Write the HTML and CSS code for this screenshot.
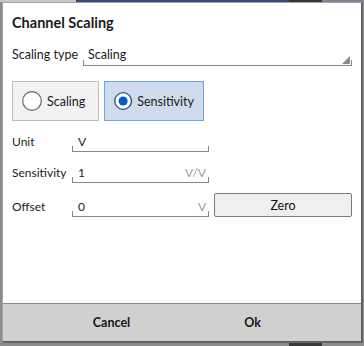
FILE: index.html
```html
<!DOCTYPE html>
<html lang="en">
<head>
    <meta charset="UTF-8">
    <meta name="viewport" content="width=device-width, initial-scale=1.0">
    <title>Channel Scaling</title>
    <link rel="stylesheet" href="styles.css">
</head>
<body>
    <div class="dialog">
        <div class="dialog-body">
            <h2 class="title">Channel Scaling</h2>

            <div class="type-row">
                <span class="label">Scaling type</span>
                <div class="select">
                    <span>Scaling</span>
                    <span class="grip"></span>
                </div>
            </div>

            <div class="toggle">
                <div class="opt">
                    <svg class="radio" width="20" height="20" viewBox="0 0 20 20">
                        <circle cx="10" cy="10" r="9.3" fill="#fff" stroke="#666" stroke-width="1.2"/>
                    </svg>
                    Scaling
                </div>
                <div class="opt opt-on">
                    <svg class="radio" width="20" height="20" viewBox="0 0 20 20">
                        <circle cx="10" cy="10" r="9.2" fill="#fff" stroke="#1d4f8f" stroke-width="1.4"/>
                        <circle cx="10" cy="10" r="5" fill="#0b5cc1"/>
                    </svg>
                    Sensitivity
                </div>
            </div>

            <div class="field-row">
                <span class="label">Unit</span>
                <div class="field"><span>V</span></div>
            </div>
            <div class="field-row">
                <span class="label">Sensitivity</span>
                <div class="field"><span>1</span><span class="suffix">V/V</span></div>
            </div>
            <div class="field-row">
                <span class="label">Offset</span>
                <div class="field"><span>0</span><span class="suffix">V</span></div>
                <button class="zero">Zero</button>
            </div>
        </div>

        <div class="footer">
            <button class="foot-btn">Cancel</button>
            <button class="foot-btn">Ok</button>
        </div>
    </div>
</body>
</html>
```

FILE: styles.css
```css
/* page behind the dialog */
html, body {
    margin: 0;
    height: 100%;
}

body {
    font-family: Lato, "Liberation Sans", sans-serif;
    font-size: 12px;
    color: #1b1b1b;
    background:
        linear-gradient(to right, #c9c9c9 0 76px, #2e4d78 76px 289px, #353535 289px 322px, #7c8594 322px) top / 100% 2px no-repeat,
        linear-gradient(to right, #8b8b8b 0 289px, #3a3a3a 289px 322px, #8b8b8b 322px) bottom / 100% 4px no-repeat,
        #8b8b8b;
    overflow: hidden;
}

/* dialog box */
.dialog {
    margin: 2px 0 0 2px;
    width: 360px;
    height: 340px;
    box-sizing: border-box;
    background: #fff;
    border: 1px solid #a3a3a3;
    border-right-color: #5c5c5c;
    border-bottom-color: #5c5c5c;
    box-shadow: 1px 1px 0 #6a6a6a;
    display: flex;
    flex-direction: column;
}

.dialog-body {
    flex: 1;
    padding: 10px 9px 0 9px;
}

.title {
    margin: 0;
    font-size: 14.5px;
    font-weight: 700;
    line-height: 20px;
}

.label {
    line-height: 20px;
    white-space: nowrap;
}

/* scaling type select */
.type-row {
    display: flex;
    margin-top: 12px;
}

.type-row .label {
    width: 71px;
    font-size: 12.5px;
}

.select {
    flex: 1;
    height: 20px;
    line-height: 18px;
    padding-left: 5px;
    font-size: 12.5px;
    border-bottom: 1px solid #868686;
    background:
        linear-gradient(#868686, #868686) left bottom / 1px 5px no-repeat,
        linear-gradient(#868686, #868686) right bottom / 1px 5px no-repeat;
    display: flex;
    align-items: flex-end;
    justify-content: space-between;
}

.select span:first-child {
    align-self: center;
}

.grip {
    width: 8px;
    height: 8px;
    margin: 0 2px 1px 0;
    background: #8a8a8a;
    clip-path: polygon(100% 0, 100% 100%, 0 100%);
}

/* scaling / sensitivity toggle */
.toggle {
    display: flex;
    gap: 5px;
    margin-top: 15px;
}

.opt {
    height: 40px;
    box-sizing: border-box;
    padding: 0 9px;
    display: flex;
    align-items: center;
    gap: 5px;
    font-size: 12.5px;
    background: #f2f2f2;
    border: 1px solid #bdbdbd;
}

.opt:first-child {
    width: 87px;
}

.opt-on {
    width: 100px;
    background: #cfdbec;
    border-color: #72a6da;
}

/* unit / sensitivity / offset rows */
.field-row {
    display: flex;
    align-items: flex-end;
    margin-top: 11px;
}

.field-row .label {
    width: 60px;
}

.field-row:last-child {
    margin-top: 10px;
}

.field {
    width: 137px;
    height: 20px;
    box-sizing: border-box;
    padding: 0 3px 0 6px;
    line-height: 19px;
    border-bottom: 1px solid #868686;
    background:
        linear-gradient(#868686, #868686) left bottom / 1px 5px no-repeat,
        linear-gradient(#868686, #868686) right bottom / 1px 5px no-repeat;
    display: flex;
    justify-content: space-between;
}

.suffix {
    color: #a09a94;
}

.zero {
    margin-left: 5px;
    width: 138px;
    height: 24px;
    font-family: inherit;
    font-size: 12.5px;
    color: #111;
    background: #efefef;
    border: 1px solid #7b7b7b;
    border-radius: 2px;
}

/* bottom buttons */
.footer {
    height: 37px;
    background: #d0d0d0;
    border-top: 1px solid #8a8a8a;
    display: flex;
    justify-content: center;
}

.foot-btn {
    width: 141px;
    border: none;
    background: transparent;
    font-family: inherit;
    font-size: 12.5px;
    font-weight: 700;
    color: #161616;
}
```
